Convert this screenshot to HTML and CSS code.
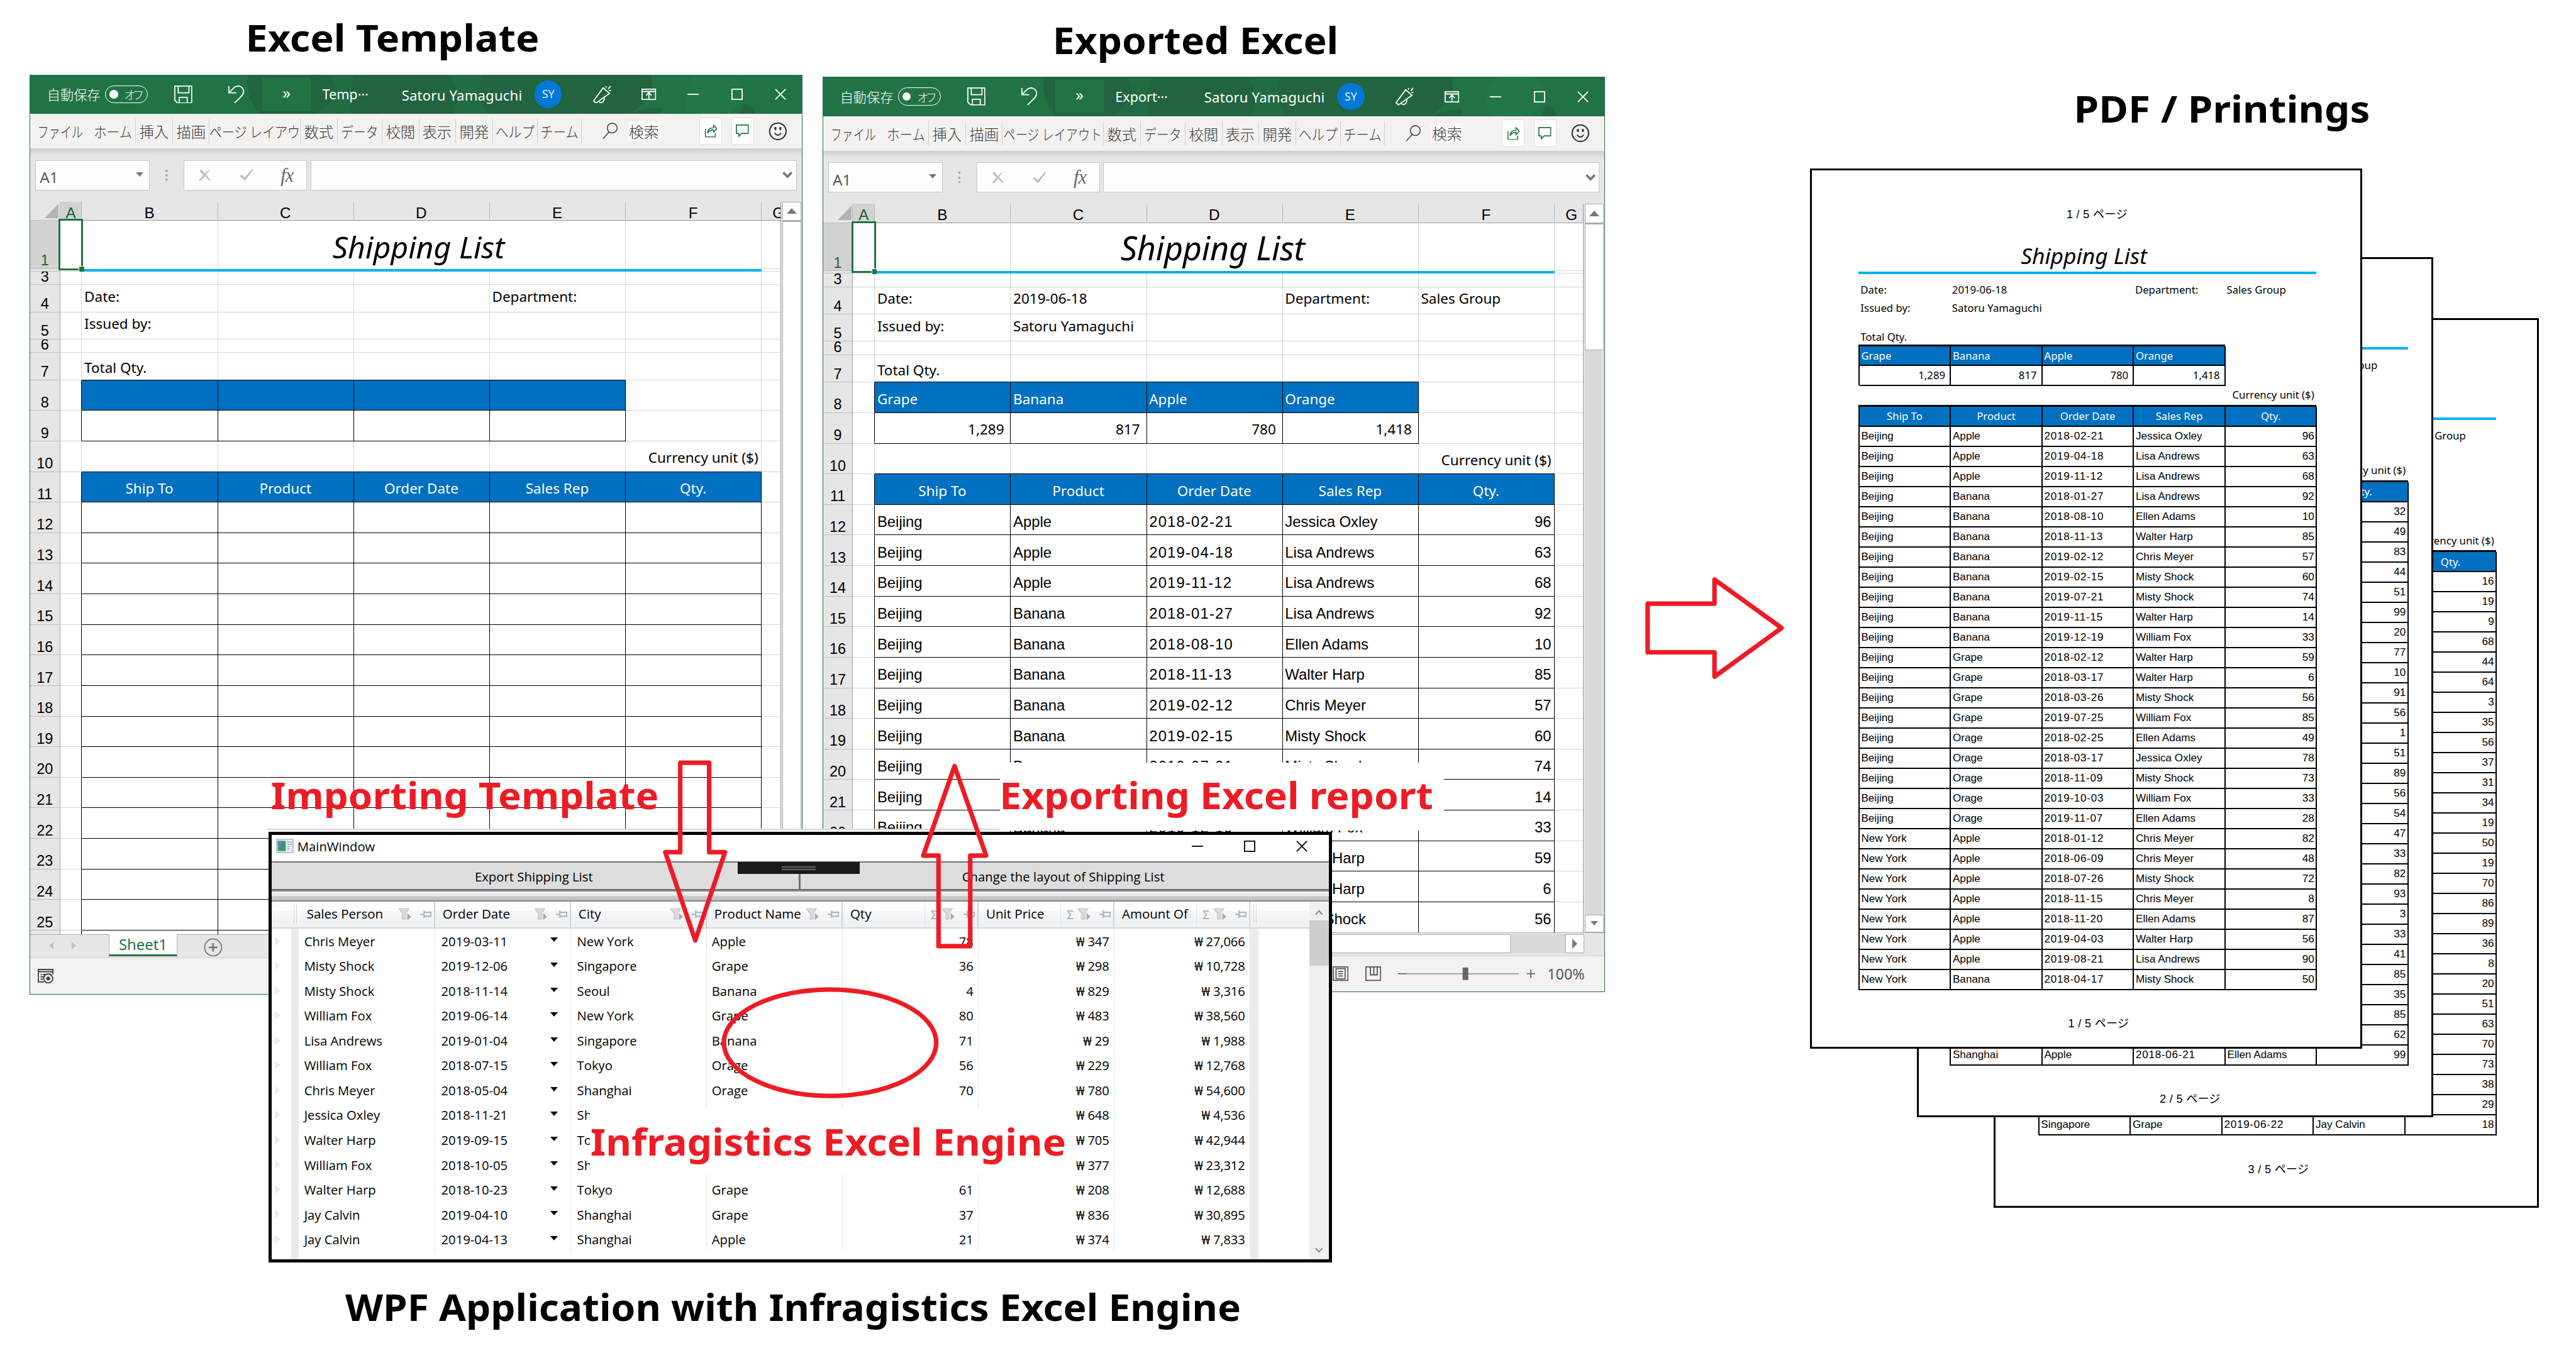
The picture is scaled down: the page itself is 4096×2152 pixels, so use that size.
FILE: index.html
```html
<!DOCTYPE html>
<html lang="ja">
<head>
<meta charset="utf-8">
<title>Excel Engine workflow</title>
<link rel="stylesheet" href="styles.css">
</head>
<body>
<svg class="defs" aria-hidden="true">
  <symbol id="i-save" viewBox="0 0 32 32"><path d="M1 1H31V31H6L1 26ZM7 1V13H26V1M9 31V21H23V31" fill="none" stroke="#fff" stroke-width="2"/></symbol>
  <symbol id="i-undo" viewBox="0 0 28 32"><path d="M1 1V13H14M1 13L11 3C19-2 27 3 27 11C27 17 20 22 11 31" fill="none" stroke="#fff" stroke-width="2"/></symbol>
  <symbol id="i-pen" viewBox="0 0 32 32"><path d="M18 4L29 14L5 31L1 27ZM10 28C13 32 20 30 20 22M23 1V4M31 1L27 6M32 9H28" fill="none" stroke="#fff" stroke-width="2"/></symbol>
  <symbol id="i-ribbon" viewBox="0 0 26 20"><path d="M1 1H25V19H1ZM1 5H25M13 19V8M8 12L13 7L18 12" fill="none" stroke="#fff" stroke-width="2"/></symbol>
  <symbol id="i-min" viewBox="0 0 20 20"><path d="M0 10H20" stroke="currentColor" stroke-width="2"/></symbol>
  <symbol id="i-max" viewBox="0 0 20 20"><path d="M1 1H19V19H1Z" fill="none" stroke="currentColor" stroke-width="2"/></symbol>
  <symbol id="i-close" viewBox="0 0 20 20"><path d="M1 1L19 19M19 1L1 19" stroke="currentColor" stroke-width="2"/></symbol>
  <symbol id="i-search" viewBox="0 0 28 30"><circle cx="17.500" cy="10" r="9" fill="none" stroke="#444" stroke-width="1.800"/><path d="M12 17L1 29" stroke="#444" stroke-width="1.800"/></symbol>
  <symbol id="i-share" viewBox="0 0 24 24"><path d="M2 8V23H20V16M6 16C6 9 11 6 17 6V1L23 8L17 14V10C12 10 8 12 6 16Z" fill="none" stroke="#217346" stroke-width="1.800"/></symbol>
  <symbol id="i-comment" viewBox="0 0 22 22"><path d="M1 1H21V15H10L5 20V15H1Z" fill="none" stroke="#217346" stroke-width="1.800"/></symbol>
  <symbol id="i-smile" viewBox="0 0 34 34"><circle cx="17" cy="17" r="15" fill="none" stroke="#333" stroke-width="2.400"/><ellipse cx="12.500" cy="12" rx="2" ry="3" fill="#333"/><ellipse cx="21.500" cy="12" rx="2" ry="3" fill="#333"/><path d="M11 20Q17 28 23 20" fill="none" stroke="#333" stroke-width="2.200"/></symbol>
  <symbol id="i-cross" viewBox="0 0 22 22"><path d="M1 3L4 0L11 8Q16 2 21 1Q17 5 13 10L22 21L19 21L11 13Q6 20 2 22L0 20Q4 16 8 11Z" fill="#c0c0c0"/></symbol>
  <symbol id="i-check" viewBox="0 0 25 21"><path d="M0 12L4 10L9 15L23 0L25 1L10 21Z" fill="#c0c0c0"/></symbol>
  <symbol id="i-chevron" viewBox="0 0 18 12"><path d="M1.500 1.500L9 9L16.500 1.500" fill="none" stroke="#777" stroke-width="4"/></symbol>
  <symbol id="i-macro" viewBox="0 0 28 26"><path d="M11 23H1V1H27V10M1 5H27M5 10H7M9 10H14M5 14H11M5 18H9" fill="none" stroke="#444" stroke-width="2.200"/><circle cx="18.500" cy="17" r="8" fill="#f3f2f1" stroke="#444" stroke-width="2.200"/><circle cx="18.500" cy="17" r="3.500" fill="#444"/></symbol>
  <symbol id="i-filter" viewBox="0 0 26 24"><path d="M1 1H20L14 9V20H8V9Z" fill="#dcdcdc" stroke="#c4c4c4" stroke-width="1.500"/><path d="M17 9L24 16L17 22Z" fill="#a8a8a8"/></symbol>
  <symbol id="i-pin" viewBox="0 0 20 14"><path d="M0 7H6M7 0V14M7 3.500H19V10.500H7" fill="none" stroke="#a9b7c2" stroke-width="2.400"/></symbol>
  <symbol id="i-page" viewBox="0 0 28 26"><path d="M1 1H27V25H1ZM6 4H22V22H6ZM10 9H18M10 13H18M10 17H18" fill="none" stroke="#555" stroke-width="2"/></symbol>
  <symbol id="i-break" viewBox="0 0 28 26"><path d="M1 1H27V25H1ZM9 1V15H21V1M15 1V15" fill="none" stroke="#555" stroke-width="2"/></symbol>
</svg>

<main class="stage">
  <section class="excel excel-template" data-book="template"></section>
  <section class="excel excel-export" data-book="export"></section>

  <section class="wpf">
    <header class="wpf-title">
      <svg class="wpf-icon" viewBox="0 0 31 26"><path d="M1 1H30V25H1Z" fill="#e8ecf0" stroke="#a5adb5" stroke-width="1.500"/><path d="M3 4H17V22H3Z" fill="#3a9a6e"/><path d="M3 4H14L3 19Z" fill="#4d8fc0"/><path d="M20 6H23M25 6H28M20 10H23M25 10H28M20 14H23M20 18H23" stroke="#6fa08a" stroke-width="1.500"/></svg>
      <span>MainWindow</span>
      <div class="wpf-controls">
        <svg><use href="#i-min"/></svg><svg><use href="#i-max"/></svg><svg><use href="#i-close"/></svg>
      </div>
    </header>
    <div class="wpf-buttons">
      <div>Export Shipping List</div><div>Change the layout of Shipping List</div>
      <i class="grip"></i>
    </div>
    <div class="splitter"></div>
    <div class="wpf-body">
      <div class="wpf-grid" id="orders"></div>
      <div class="wpf-scroll">
        <svg viewBox="0 0 14 9"><path d="M1 8L7 1.500L13 8" fill="none" stroke="#808080" stroke-width="2"/></svg>
        <i></i>
        <svg viewBox="0 0 14 9"><path d="M1 1L7 7.500L13 1" fill="none" stroke="#808080" stroke-width="2"/></svg>
      </div>
    </div>
  </section>

  <section class="page page-3" data-page="3"></section>
  <section class="page page-2" data-page="2"></section>
  <section class="page page-1" data-page="1"></section>

  <svg class="marks" viewBox="0 0 4548 2390" fill="none" stroke="#ed1c24" stroke-width="8" stroke-linejoin="round">
    <path d="M1201 1347H1252V1505H1280L1227.500 1661L1174.500 1505H1201Z"/>
    <path d="M1685.300 1353L1741 1511H1713V1671H1657V1511H1630Z"/>
    <path d="M2909 1066H3027V1023.500L3145.500 1109L3027 1195V1152H2909Z"/>
    <ellipse cx="1465.500" cy="1841.500" rx="187.500" ry="94"/>
  </svg>

  <h2 class="label l-template">Excel Template</h2>
  <h2 class="label l-export">Exported Excel</h2>
  <h2 class="label l-pdf">PDF / Printings</h2>
  <h2 class="label l-wpf">WPF Application with Infragistics Excel Engine</h2>
  <div class="label red l-importing">Importing Template</div>
  <div class="plate plate-exporting"></div>
  <div class="label red l-exporting">Exporting Excel report</div>
  <div class="plate plate-engine"></div>
  <div class="label red l-engine">Infragistics Excel Engine</div>
</main>
<script src="app.js"></script>
</body>
</html>
```

FILE: styles.css
```css
*, *::before, *::after { box-sizing: border-box; }
html, body { margin: 0; background: #fff; overflow: hidden; }
body { width: 4096px; height: 2152px; }
.defs { position: absolute; width: 0; height: 0; }
.stage {
  position: relative; width: 4548px; height: 2390px; zoom: 0.90061;
  font-family: "Noto Sans", "Noto Sans CJK JP", sans-serif; color: #000; overflow: hidden;
}
svg { display: block; flex: none; }
i { font-style: normal; }

/* captions */
.label { --s: 1.05; position: absolute; margin: 0; font-weight: 700; font-size: 66px; line-height: 80px; white-space: nowrap; transform: translateX(-50%) scaleX(var(--s)); }
.red { color: #ed1c24; }
.l-template { --s: 1.058; left: 693px; top: 25.700px; }
.l-export { --s: 1.048; left: 2111px; top: 29.700px; }
.l-pdf { --s: 1.075; left: 3923px; top: 151px; }
.l-wpf { --s: 1.046; left: 1399.700px; top: 2267px; }
.l-importing { --s: 1.04; left: 821px; top: 1363.400px; }
.l-exporting { --s: 1.048; left: 2147.500px; top: 1363.400px; }
.l-engine { --s: 1.054; left: 1462px; top: 1975px; }
.plate { position: absolute; background: #fff; }
.plate-exporting { left: 1765px; top: 1347px; width: 784px; height: 120px; }
.plate-engine { left: 1041px; top: 1958px; width: 858px; height: 113px; }
.marks { position: absolute; left: 0; top: 0; width: 4548px; height: 2390px; }

/* excel window */
.excel { position: absolute; display: flex; flex-direction: column; background: #e6e6e6; border: 2px solid #217346; border-top: 0; }
.excel-template { left: 52px; top: 132px; width: 1365px; height: 1624.500px; }
.excel-export { left: 1452px; top: 136px; width: 1382px; height: 1616.500px; }
.titlebar { position: relative; height: 69px; flex: none; display: flex; align-items: center; background: #217346; color: #fff; padding: 0 28px 0 30px; font-size: 24px; white-space: nowrap; }
.titlebar > * { position: relative; flex: none; }
.titlebar .pattern { position: absolute; left: 0; top: 0; width: 100%; height: 69px; }
.autosave { font-family: "Noto Sans CJK JP", sans-serif; font-size: 23.500px; font-weight: 300; width: 94px; }
.toggle { width: 76px; height: 32px; margin-left: 8px; border: 1.500px solid #fff; border-radius: 16px; display: flex; align-items: center; padding-left: 7px; }
.toggle::before { content: ""; width: 15px; height: 15px; border-radius: 50%; background: #fff; }
.toggle span { font-family: "Noto Sans CJK JP", sans-serif; font-weight: 300; font-size: 20px; letter-spacing: -5px; margin-left: 11px; }
.t-save { width: 32px; height: 32px; margin-left: 47px; }
.t-undo { width: 28px; height: 32px; margin-left: 63px; }
.more { width: 86px; height: 58px; margin-left: 32px; background: #217346; text-align: center; line-height: 52px; font-size: 28px; }
.bookname { margin-left: 20px; }
.bookname i { position: relative; top: -7px; }
.user { margin-left: auto; padding-top: 2px; font-size: 24.600px; letter-spacing: 0.200px; }
.avatar { width: 48px; height: 48px; border-radius: 50%; background: #0078d7; margin-left: 22px; text-align: center; line-height: 47px; font-size: 20px; color: #e3f1fb; }
.t-pen { width: 32px; height: 32px; margin-left: 55px; }
.t-ribbon { width: 26px; height: 20px; margin-left: 54px; }
.t-win { width: 20px; height: 20px; margin-left: 57px; }
.t-ribbon + .t-win { margin-left: 55px; }

.tabs { height: 61px; flex: none; display: flex; align-items: center; background: #f3f2f1; color: #3c3c3c; font-family: "Noto Sans CJK JP", sans-serif; font-weight: 300; font-size: 26.500px; }
.tabs .tab { height: 43px; flex: none; display: flex; align-items: center; justify-content: center; border-right: 1.500px solid #d0d0d0; white-space: nowrap; }
.tabs .tab:first-child { border-right: 0; }
.tabs span { display: inline-block; flex: none; }
.tabs .find { background: #faf9f8; width: 58px; height: 35px; line-height: 35px; margin-left: 16.500px; text-align: center; }
.tabs .search { width: 27.500px; height: 29px; margin-left: 36.500px; }
.tabs .chip { width: 40px; height: 48px; background: #fff; border: 1.500px solid #e1dfdd; border-radius: 5px; display: flex; align-items: center; justify-content: center; }
.tabs .chip.share { margin-left: auto; }
.tabs .chip.comment { margin: 0 26px 0 16px; }
.chip svg { width: 23px; height: 23px; }
.smile { width: 33px; height: 33px; margin-right: 26px; }

.formula { height: 94px; flex: none; display: flex; padding: 21px 9px 20px; background: linear-gradient(#cfcecd, #e6e6e6 13px); }
.formula > div { background: #fdfdfd; border: 1.500px solid #c6c6c6; display: flex; align-items: center; }
.namebox { width: 202px; padding: 7px 10px 0 7px; font-size: 27px; color: #555; justify-content: space-between; }
.namebox::after { content: ""; border: 7px solid transparent; border-top: 8px solid #777; border-bottom: 0; margin-top: -10px; }
.formula .dots { width: 4px; margin: 0 28px; border: 0; background: linear-gradient(#aaa, #aaa) 0 0/4px 4px no-repeat, linear-gradient(#aaa, #aaa) 0 50%/4px 4px no-repeat, linear-gradient(#aaa, #aaa) 0 100%/4px 4px no-repeat; height: 20px; align-self: center; }
.fx { width: 218px; padding: 0 23px 0 25px; justify-content: space-between; }
.fx svg { width: 24px; height: 21px; }
.fx em { font: italic 34px/40px "Liberation Serif", serif; color: #666; letter-spacing: -1px; }
.formula .entry { flex: 1; margin-left: 6px; justify-content: flex-end; padding-right: 6px; }
.entry svg { width: 18px; height: 12px; }

.sheet { flex: 1; min-height: 0; display: flex; }
.cells { width: calc(100% - 37px); overflow: hidden; border-right: 2px solid #9a9a9a; background: #fff; }
.vscroll { width: 33px; margin-left: 2.500px; display: flex; flex-direction: column; background: #dadada; }
.vscroll b { height: 34px; flex: none; background: #fff; border: 1.500px solid #ababab; display: flex; align-items: center; justify-content: center; }
.vscroll b::before { content: ""; border: 9px solid transparent; border-bottom: 10px solid #777; border-top: 0; }
.vscroll b.down::before { border: 7px solid transparent; border-top: 8px solid #777; border-bottom: 0; }
.vscroll i { background: #fff; border: 1.500px solid #ababab; border-top-width: 3px; flex: 1; }
.excel-export .vscroll i { flex: none; height: 225px; }
.excel-export .vscroll .down { margin-top: auto; height: 31px; }
.row { display: flex; width: 1500px; }
.row > div { flex: none; width: 240px; overflow: hidden; white-space: nowrap; border-right: 1.500px solid #d4d4d4; border-bottom: 1.500px solid #d4d4d4; font-size: 25px; padding: 0 5px 0 4px; display: flex; align-items: center; }
.row > .h { width: 53px; background: #e6e6e6; border-right: 1.500px solid #9f9f9f; border-bottom-color: #bdbdbd; font: 26px/26px "Liberation Sans", sans-serif; padding: 0; align-items: flex-end; justify-content: center; }
.row > .a { width: 38.800px; padding: 0; }
.head > div { background: #e6e6e6; border-bottom: 2px solid #9a9a9a; border-right-color: #b5b5b5; justify-content: center; font: 27px/30px "Liberation Sans", sans-serif; padding-top: 6px; }
.row.head > .a { padding: 6px 0 0; }
.head > .h { align-items: center; padding: 0 2px 0 0; justify-content: flex-end; border-right: 1px solid #bbb; }
.head > .h::before { content: ""; border-left: 25px solid transparent; border-bottom: 26px solid #b4b4b4; }
.row > .sel { background: #d2d2d2; color: #1c5f3a; }
.row > div.g { width: 80px; padding: 0; }
.row.head > div.g { justify-content: flex-start; padding: 6px 0 0 19px; }
.row.r1 > .a { position: relative; overflow: visible; border: 0; }
.row.r1 > .a::before { content: ""; position: absolute; z-index: 2; left: -2.500px; top: -3.500px; width: 43px; height: 91px; border: 3.400px solid #217346; }
.row.r1 > .a::after { content: ""; position: absolute; z-index: 2; right: -3.500px; bottom: -5px; width: 9.500px; height: 10px; background: #217346; border: solid #fff; border-width: 1.500px 0 0 1.500px; }
.r1 > .b, .r1 > .c, .r1 > .d, .r1 > .e, .r1 > .f { border-bottom: 0; }
.row > .nr { border-right-color: transparent; }
.row.r1 > .c { overflow: visible; position: relative; }
.row.r1 .heading { font-style: italic; position: absolute; width: 720px; left: -6px; top: 15px; text-align: center; font-size: 53.500px; line-height: 60px; }
.excel-export .row.r1 .heading { font-size: 58px; left: -4px; top: 13.500px; letter-spacing: -0.300px; }
.row.r2 > div { border-bottom-width: 1px; }
.row.r2 > .b, .row.r2 > .c, .row.r2 > .d, .row.r2 > .e, .row.r2 > .f { background: #00b0f0; border-color: #00b0f0; }
.row > .kb { border-bottom: 1.500px solid #000; }
.row > .kr { border-right: 1.500px solid #000; }
.row > .blue { background: #0070c0; color: #fff; }
.row > .c-mid { justify-content: center; }
.row > .c-end { justify-content: flex-end; }
.row > .c-sum { padding-right: 11px; }
.row > .up { padding-bottom: 7px; }
.row > .dn { padding-top: 5px; }
.row > .gothic { font-family: "Liberation Sans", sans-serif; font-size: 26.500px; padding-top: 8px; }
.row > .date { letter-spacing: 1.300px; }

.sheetbar { height: 41px; flex: none; display: flex; border-top: 1.500px solid #ababab; position: relative; }
.sheetbar .nav { border: 7.500px solid transparent; height: 0; margin: 12px 0 0; }
.sheetbar .prev { border-right: 8px solid #c0c0c0; border-left: 0; margin-left: 33px; }
.sheetbar .next { border-left: 8px solid #c0c0c0; border-right: 0; margin-left: 33px; }
.sheetbar .name { margin: -1.500px 0 3px 57px; width: 122px; background: #fff; border: 1px solid #b5b5b5; border-top: 0; border-bottom: 3.400px solid #217346; color: #217346; font-size: 26.500px; line-height: 36px; text-align: center; }
.sheetbar .add { width: 33px; height: 33px; margin: 5px 0 0 46px; }
.hscroll { margin: 2px 36px 0 auto; width: 650px; height: 34px; background: #dadada; display: flex; justify-content: space-between; }
.hscroll i { width: 520px; background: #fff; border: 1.500px solid #ababab; }
.hscroll b { width: 33px; background: #fff; border: 1.500px solid #ababab; display: flex; align-items: center; justify-content: center; }
.hscroll b::before { content: ""; border: 9px solid transparent; border-left: 9px solid #777; border-right: 0; }
.status { height: 64px; flex: none; display: flex; align-items: center; background: #f3f2f1; border-top: 1.500px solid #d0d0d0; padding: 0 35px 0 14px; color: #555; font-size: 26px; }
.status .macro { width: 28px; height: 26px; margin-right: auto; }
.status .view { width: 28px; height: 26px; margin-right: 30px; }
.status .zoombar { width: 242px; height: 24px; margin: 0 21px 0 0; }

/* wpf window */
.wpf { position: absolute; left: 474.500px; top: 1469px; width: 1877.500px; height: 761px; border: 5.600px solid #000; background: #fff; font-family: "Open Sans", "Noto Sans", sans-serif; font-size: 22.500px; display: flex; flex-direction: column; }
.wpf::before { content: ""; position: absolute; left: -8px; top: -11px; width: 1293px; height: 5.400px; background: #fff; border-top: 2.300px solid #d2d2d2; }
.wpf-title { height: 47px; flex: none; display: flex; align-items: center; padding: 0 38px 8px 7px; }
.wpf-icon { width: 31px; height: 26px; margin-right: 7px; }
.wpf-controls { display: flex; gap: 72px; margin-left: auto; }
.wpf-controls svg { width: 20px; height: 20px; }
.wpf-buttons { height: 51px; flex: none; display: flex; position: relative; background: #ddd; border: solid #707070; border-width: 2.300px 0; }
.wpf-buttons div { width: 50%; display: flex; align-items: center; justify-content: center; padding: 2px 5px 0 0; letter-spacing: 0.050px; }
.wpf-buttons div:first-child { border-right: 3.400px solid #707070; }
.grip { position: absolute; left: 822px; top: -2px; width: 216px; height: 22px; background: #1a1a1a; }
.grip::before { content: ""; position: absolute; left: 78px; top: 8px; width: 60px; height: 7px; border: solid #6a6a6a; border-width: 2.300px 0; }
.splitter { height: 19.500px; flex: none; border: solid #888a94; border-width: 2.300px 0; background: linear-gradient(#f4f4f5, #e6e6e7 50%, #cfcfd1 50%, #bcbdbf); }
.wpf-body { flex: 1; min-height: 0; display: flex; justify-content: space-between; }
.wpf-grid { width: 1832px; overflow: hidden; display: flex; flex-direction: column; }
.ghead { height: 48px; flex: none; display: flex; background: linear-gradient(#fff 35%, #f6f7f8 36%, #eef0f3); border-bottom: 2.300px solid #d4d4d4; font-size: 22.800px; }
.ghead .corner { width: 48px; border-right: 2px solid #fff; background: linear-gradient(#d4d4d4, #d4d4d4) 39px 6px/1.500px 34px no-repeat, linear-gradient(#d4d4d4, #d4d4d4) 43px 6px/1.500px 34px no-repeat; }
.ghead .end { width: 20px; background: linear-gradient(#d4d4d4, #d4d4d4) 6px 5px/1.500px 34px no-repeat, linear-gradient(#d4d4d4, #d4d4d4) 10px 5px/1.500px 34px no-repeat; }
.ghead .col { width: 239.900px; display: flex; align-items: center; border-right: 2.300px solid #d4d4d4; padding: 0 4px 4px 13.500px; }
.col .cap { flex: 1; overflow: hidden; white-space: nowrap; }
.col .filter { width: 25px; height: 24px; margin: 4px 14px 0 9px; }
.col .pin { width: 20px; height: 14px; margin-top: 4px; }
.col .sum { align-self: stretch; margin: 0 -2px -4px 5px; padding: 9px 0 0 10px; border-left: 2px solid #d3e6f0; color: #a9b7c2; font-weight: 600; font-size: 21px; }
.gbody { flex: 1; position: relative; background: linear-gradient(90deg, transparent 34px, #ebebeb 34px 48px, transparent 48px 1727.500px, #ebebeb 1727.500px 1742.500px, transparent 1742.500px); }
.grow { display: flex; height: 43.900px; font-size: 22.500px; }
.grow .ind { width: 48px; padding: 14px 0 0 5px; flex: none; }
.grow .ind::before { content: ""; display: block; width: 0; border: 8px solid transparent; border-left: 11px solid #ececec; border-right: 0; }
.grow > div:not(.ind) { width: 239.900px; flex: none; padding: 0 8px 0 9px; display: flex; align-items: center; border-right: 1.500px solid #e6e6e6; }
.grow > div:not(.ind):nth-child(3), .grow > div:not(.ind):nth-child(4) { padding-left: 11px; }
.grow > div.dt::after { content: ""; margin-left: auto; margin-right: 14px; border: 7px solid transparent; border-top: 8px solid #000; border-bottom: 0; margin-top: -4px; }
.grow > div.num { justify-content: flex-end; letter-spacing: -0.200px; }
.wpf-scroll { width: 35px; background: #f0f0f0; display: flex; flex-direction: column; align-items: center; padding: 15px 0 12px; }
.wpf-scroll svg { width: 14px; height: 10px; }
.wpf-scroll i { width: 35px; height: 79px; margin: 9px 0 auto; background: #cdcdcd; }

/* printed pages */
.page { position: absolute; background: #fff; border: 3.400px solid #000; overflow: hidden; }
.page-1 { left: 3196px; top: 298px; width: 975px; height: 1554px; }
.page-2 { left: 3384.500px; top: 454px; width: 911px; height: 1519px; }
.page-3 { left: 3520px; top: 562px; width: 963px; height: 1571px; }
.paper { width: 809px; font-size: 18.600px; }
.page-1 .paper { margin: -3.400px 0 0 81.500px; }
.page-2 .paper { margin: -26.500px 0 0 54.500px; }
.page-3 .paper { margin: -10.500px 0 0 75px; }
.pno { line-height: 40px; text-align: center; padding-left: 40px; padding-top: 60.600px; font-family: "Liberation Sans", "Noto Sans CJK JP", sans-serif; font-size: 20px; letter-spacing: 0.400px; }
.pfoot { padding-top: 39.500px; }
.ptitle { padding: 26px 2px 0 0; line-height: 55.400px; font-size: 39.300px; font-style: italic; text-align: center; border-bottom: 4.500px solid #00b0f0; }
.meta { display: flex; line-height: 32px; }
.meta.first { margin-top: 12.300px; }
.meta span { width: 161.600px; padding-left: 4px; white-space: nowrap; }
.ptotal { margin-top: 20.700px; line-height: 26.600px; padding-left: 4px; }
.pgrid { display: grid; grid-template-columns: repeat(5, 161.600px); border-top: 3.400px solid #000; border-left: 2.300px solid #000; }
.pgrid > div { height: 35.540px; border-right: 2.300px solid #000; border-bottom: 2.300px solid #000; padding: 0 3px; display: flex; align-items: center; white-space: nowrap; font-family: "Liberation Sans", sans-serif; font-size: 19px; }
.pgrid.totals { grid-template-columns: repeat(4, 161.600px); width: 648px; height: 73px; border-right: 1px solid #000; border-bottom: 2px solid #000; }
.pgrid.totals > div { height: 35px; font-family: inherit; font-size: 18.600px; }
.pgrid > .blue { background: #0070c0; color: #fff; font-family: inherit; font-size: 18.600px; }
.pgrid > .c-mid { justify-content: center; }
.pgrid > .c-end { justify-content: flex-end; }
.pgrid.totals > .c-end { padding-right: 8px; }
.pgrid > .date { letter-spacing: 0.800px; }
.pcur { text-align: right; line-height: 34px; padding-right: 4px; }
```

FILE: app.js
```js
const el = (cls, html = "") => `<div class="${cls}">${html}</div>`;
const use = (cls, id) => `<svg class="${cls}"><use href="#${id}"/></svg>`;

const records = `Beijing|Apple|2018-02-21|Jessica Oxley|96
Beijing|Apple|2019-04-18|Lisa Andrews|63
Beijing|Apple|2019-11-12|Lisa Andrews|68
Beijing|Banana|2018-01-27|Lisa Andrews|92
Beijing|Banana|2018-08-10|Ellen Adams|10
Beijing|Banana|2018-11-13|Walter Harp|85
Beijing|Banana|2019-02-12|Chris Meyer|57
Beijing|Banana|2019-02-15|Misty Shock|60
Beijing|Banana|2019-07-21|Misty Shock|74
Beijing|Banana|2019-11-15|Walter Harp|14
Beijing|Banana|2019-12-19|William Fox|33
Beijing|Grape|2018-02-12|Walter Harp|59
Beijing|Grape|2018-03-17|Walter Harp|6
Beijing|Grape|2018-03-26|Misty Shock|56
Beijing|Grape|2019-07-25|William Fox|85
Beijing|Orage|2018-02-25|Ellen Adams|49
Beijing|Orage|2018-03-17|Jessica Oxley|78
Beijing|Orage|2018-11-09|Misty Shock|73
Beijing|Orage|2019-10-03|William Fox|33
Beijing|Orage|2019-11-07|Ellen Adams|28
New York|Apple|2018-01-12|Chris Meyer|82
New York|Apple|2018-06-09|Chris Meyer|48
New York|Apple|2018-07-26|Misty Shock|72
New York|Apple|2018-11-15|Chris Meyer|8
New York|Apple|2018-11-20|Ellen Adams|87
New York|Apple|2019-04-03|Walter Harp|56
New York|Apple|2019-08-21|Lisa Andrews|90
New York|Banana|2018-04-17|Misty Shock|50`.split("\n").map(r => r.split("|"));
const headers = ["Ship To", "Product", "Order Date", "Sales Rep", "Qty."];
const totals = [["Grape", "1,289"], ["Banana", "817"], ["Apple", "780"], ["Orange", "1,418"]];
const letters = ["b", "c", "d", "e", "f"];

/* ---- Excel windows ---- */
function sheetRows(full) {
  const row = (n, h, cells, hcls = "") =>
    `<div class="row r${n}" style="height:${h}px">${el("h " + hcls, n === 2 || n > 25 ? "" : n)}${cells}${el("g")}</div>`;
  const plain = (map = {}, cls = {}) => el("a " + (cls.a || "")) + letters.map(l => el(`${l} ${cls[l] || ""}`, map[l])).join("");
  let out = `<div class="row head" style="height:34px">${el("h")}${el("a sel", "A")}${["B", "C", "D", "E", "F"].map(c => el("", c)).join("")}${el("g", "G")}</div>`;
  out += row(1, 85, plain({ c: `<span class="heading">Shipping List</span>` }, { c: "nr", d: "nr" }), "sel");
  out += row(2, 4.5, plain());
  out += row(3, 24, plain());
  out += row(4, 48, plain({ b: "Date:", c: full && "2019-06-18" || "", e: "Department:", f: full && "Sales Group" || "" }, { b: "up", c: "up", e: "up", f: "up" }));
  out += row(5, 48, plain({ b: "Issued by:", c: full && "Satoru Yamaguchi" || "" }, { b: "up", c: "up" }));
  out += row(6, 24, plain());
  out += row(7, 48, plain({ b: "Total Qty." }, { b: "dn kb", c: "kb", d: "kb", e: "kb" }));
  const t = i => full ? totals.map((x, k) => [letters[k], x[i]]) : [];
  const k = "kb kr ";
  out += row(8, 54, plain(Object.fromEntries(t(0)), { a: "kr", b: k + "blue dn", c: k + "blue dn", d: k + "blue dn", e: k + "blue dn" }));
  out += row(9, 54, plain(Object.fromEntries(t(1)), { a: "kr", b: k + "c-end c-sum dn", c: k + "c-end c-sum dn", d: k + "c-end c-sum dn", e: k + "c-end c-sum dn" }));
  out += row(10, 54, plain({ f: "Currency unit ($)" }, { b: "kb", c: "kb", d: "kb", e: "kb", f: "kb c-end dn" }));
  const all = c => Object.fromEntries([["a", "kr"], ...letters.map(l => [l, c])]);
  out += row(11, 54, plain(Object.fromEntries(letters.map((l, i) => [l, headers[i]])), all(k + "blue c-mid dn")));
  for (let n = 12; n <= 26; n++) {
    const rec = full ? records[n - 12] : [];
    const cls = all(k + "gothic");
    cls.d += " date"; cls.f += " c-end";
    out += row(n, 54, plain(Object.fromEntries(letters.map((l, i) => [l, rec[i] || ""])), cls));
  }
  return out;
}

function excel(node) {
  const full = node.dataset.book === "export";
  const tabs = [["ファイル", 106, .76], ["ホーム", 81, .86], ["挿入", 65.5, .98], ["描画", 64.5, .98],
    full ? ["ページ レイアウト", 179, .8] : ["ページ レイアウ", 161, .84],
    ["数式", 65.3, .98], ["データ", 79, .83], ["校閲", 65, .98], ["表示", 64.5, .98], ["開発", 65.5, .98], ["ヘルプ", 79, .87], ["チーム", 78, .85]];
  node.innerHTML = `
  <div class="titlebar">
    <svg class="pattern" viewBox="0 0 1365 69" preserveAspectRatio="none"><path d="M385 0H1098Q1108 38 1060 69H405Q380 40 385 0ZM1060 69Q1090 58 1115 58Q1120 60 1112 69ZM1238 69Q1245 52 1262 52Q1276 52 1281 69Z" fill="#22643f"/><path d="M740 0H798Q790 40 808 69H748Q765 30 740 0ZM500 69Q560 40 530 0H575Q560 30 570 69Z" fill="#217346" opacity=".55"/><circle cx="1210" cy="42" r="52" fill="#237a4a" opacity=".6"/></svg>
    <span class="autosave">自動保存</span><span class="toggle"><span>オフ</span></span>
    ${use("t-save", "i-save")}${use("t-undo", "i-undo")}<span class="more">»</span>
    <span class="bookname">${full ? "Export" : "Temp"}<i>…</i></span>
    <span class="user">Satoru Yamaguchi</span><span class="avatar">SY</span>
    ${use("t-pen", "i-pen")}${use("t-ribbon", "i-ribbon")}${use("t-win", "i-min")}${use("t-win", "i-max")}${use("t-win", "i-close")}
  </div>
  <div class="tabs">${tabs.map(([t, w, s]) => `<div class="tab" style="width:${w}px"><span style="transform:scaleX(${s})">${t}</span></div>`).join("")}
    ${use("search", "i-search")}<div class="find">検索</div>
    <div class="chip share">${use("", "i-share")}</div><div class="chip comment">${use("", "i-comment")}</div>${use("smile", "i-smile")}
  </div>
  <div class="formula"><div class="namebox">A1</div><div class="dots"></div>
    <div class="fx">${use("", "i-cross")}${use("", "i-check")}<em>fx</em></div><div class="entry">${use("", "i-chevron")}</div></div>
  <div class="sheet"><div class="cells">${sheetRows(full)}</div><div class="vscroll"><b></b><i></i><b class="down"></b></div></div>
  <div class="sheetbar"><i class="nav prev"></i><i class="nav next"></i><div class="name">Sheet1</div>
    <svg class="add" viewBox="0 0 33 33"><circle cx="16.500" cy="16.500" r="15" fill="none" stroke="#777" stroke-width="2"/><path d="M16.500 9V24M9 16.500H24" stroke="#777" stroke-width="3"/></svg>
    <div class="hscroll"><i></i><b></b></div></div>
  <div class="status">${use("macro", "i-macro")}${use("view", "i-page")}${use("view", "i-break")}
    <svg class="zoombar" viewBox="0 0 242 24"><path d="M0 12H15M227 12H242M234.500 4.500V19.500" stroke="#555" stroke-width="1.800"/><path d="M15 12H213" stroke="#ababab" stroke-width="2.500"/><path d="M114 1H124V23H114Z" fill="#666"/></svg>100%</div>`;
}
document.querySelectorAll(".excel").forEach(excel);

/* ---- WPF grid ---- */
const orders = `Chris Meyer|2019-03-11|New York|Apple|78|347|27,066
Misty Shock|2019-12-06|Singapore|Grape|36|298|10,728
Misty Shock|2018-11-14|Seoul|Banana|4|829|3,316
William Fox|2019-06-14|New York|Grape|80|483|38,560
Lisa Andrews|2019-01-04|Singapore|Banana|71|29|1,988
William Fox|2018-07-15|Tokyo|Orage|56|229|12,768
Chris Meyer|2018-05-04|Shanghai|Orage|70|780|54,600
Jessica Oxley|2018-11-21|Sh|||648|4,536
Walter Harp|2019-09-15|To|||705|42,944
William Fox|2018-10-05|Sh|||377|23,312
Walter Harp|2018-10-23|Tokyo|Grape|61|208|12,688
Jay Calvin|2019-04-10|Shanghai|Grape|37|836|30,895
Jay Calvin|2019-04-13|Shanghai|Apple|21|374|7,833`.split("\n").map(r => r.split("|"));
const cols = ["Sales Person", "Order Date", "City", "Product Name", "Qty", "Unit Price", "Amount Of"];
document.getElementById("orders").innerHTML =
  `<div class="ghead"><div class="corner"></div>${cols.map((c, i) =>
    `<div class="col"><span class="cap">${c}</span>${i > 3 ? '<span class="sum">Σ</span>' : ""}${use("filter", "i-filter")}${use("pin", "i-pin")}</div>`).join("")}<div class="end"></div></div>
  <div class="gbody">${orders.map(o => `<div class="grow">${el("ind")}${o.map((v, i) =>
    el(i === 1 ? "dt" : i > 3 ? "num" : "", i > 4 ? "₩ " + v : v)).join("")}</div>`).join("")}</div>`;

/* ---- Printed pages: the lower sheets only show their last column and last row ---- */
const qty = {
  2: [32,49,83,44,51,99,20,77,10,91,56,1,51,89,56,54,47,33,82,93,3,33,41,85,35,85,62,99],
  3: [16,19,9,68,44,64,3,35,56,37,31,34,19,50,19,70,86,89,36,8,20,51,63,70,73,38,29,18]
};
const last = { 2: ["Shanghai", "Apple", "2018-06-21", "Ellen Adams"], 3: ["Singapore", "Grape", "2019-06-22", "Jay Calvin"] };
document.querySelectorAll(".page").forEach(node => {
  const p = +node.dataset.page, first = p === 1;
  const rows = first ? records : qty[p].map((q, i) => [...(i === 27 ? last[p] : ["", "", "", ""]), q]);
  const top = t => first ? t : "";
  node.innerHTML = `<div class="paper">
    <div class="pno">${top("1 / 5 ページ")}&nbsp;</div>
    <div class="ptitle">${top("Shipping List")}&nbsp;</div>
    <div class="meta first"><span>${top("Date:")}</span><span>${top("2019-06-18")}</span><span></span><span>${top("Department:")}</span><span>Sales Group</span></div>
    <div class="meta"><span>${top("Issued by:")}&nbsp;</span><span>${top("Satoru Yamaguchi")}</span></div>
    <div class="ptotal">${top("Total Qty.")}&nbsp;</div>
    <div class="pgrid totals">${totals.map(t => el("blue", top(t[0]))).join("")}${totals.map(t => el("c-end", top(t[1]))).join("")}</div>
    <div class="pcur">Currency unit ($)</div>
    <div class="pgrid">${headers.map((h, i) => el("blue c-mid", first || i === 4 ? h : "")).join("")}${rows.map(r =>
      r.map((v, i) => el(i === 2 ? "date" : i === 4 ? "c-end" : "", v)).join("")).join("")}</div>
    <div class="pno pfoot">${p} / 5 ページ</div></div>`;
});
```
